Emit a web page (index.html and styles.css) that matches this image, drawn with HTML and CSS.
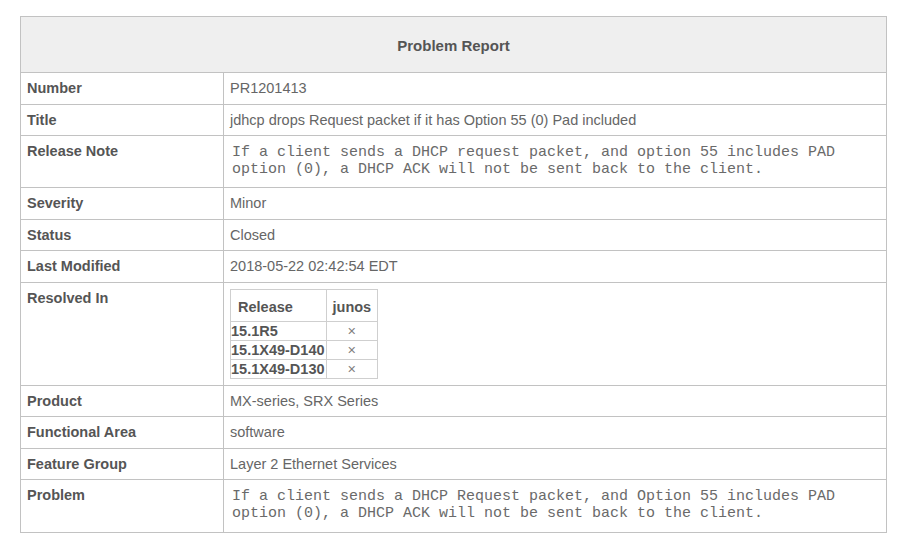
FILE: index.html
```html
<!DOCTYPE html>
<html>
<head>
<meta charset="utf-8">
<title>Problem Report</title>
<link rel="stylesheet" href="styles.css">
</head>
<body>
<table class="report">
  <colgroup><col class="col-label"><col class="col-value"></colgroup>
  <thead>
    <tr><th class="title" colspan="2">Problem Report</th></tr>
  </thead>
  <tbody>
    <tr><td class="label">Number</td><td class="value">PR1201413</td></tr>
    <tr><td class="label">Title</td><td class="value">jdhcp drops Request packet if it has Option 55 (0) Pad included</td></tr>
    <tr><td class="label">Release Note</td><td class="value"><pre class="mono">If a client sends a DHCP request packet, and option 55 includes PAD
option (0), a DHCP ACK will not be sent back to the client.</pre></td></tr>
    <tr><td class="label">Severity</td><td class="value">Minor</td></tr>
    <tr><td class="label">Status</td><td class="value">Closed</td></tr>
    <tr><td class="label">Last Modified</td><td class="value">2018-05-22 02:42:54 EDT</td></tr>
    <tr><td class="label">Resolved In</td><td class="value">
      <table class="releases">
        <thead><tr><th class="rel-head">Release</th><th class="rel-head junos">junos</th></tr></thead>
        <tbody>
          <tr><td class="rel">15.1R5</td><td class="mark">×</td></tr>
          <tr><td class="rel">15.1X49-D140</td><td class="mark">×</td></tr>
          <tr><td class="rel">15.1X49-D130</td><td class="mark">×</td></tr>
        </tbody>
      </table>
    </td></tr>
    <tr><td class="label">Product</td><td class="value">MX-series, SRX Series</td></tr>
    <tr><td class="label">Functional Area</td><td class="value">software</td></tr>
    <tr><td class="label">Feature Group</td><td class="value">Layer 2 Ethernet Services</td></tr>
    <tr><td class="label">Problem</td><td class="value"><pre class="mono mono-last">If a client sends a DHCP Request packet, and Option 55 includes PAD
option (0), a DHCP ACK will not be sent back to the client.</pre></td></tr>
  </tbody>
</table>
</body>
</html>
```
FILE: styles.css
```css
html, body {
  margin: 0;
  padding: 0;
  background: #ffffff;
}

body {
  font-family: "Liberation Sans", Arial, sans-serif;
  font-size: 14.5px;
  color: #555555;
}

.report {
  border-collapse: collapse;
  table-layout: fixed;
  width: 867px;
  margin: 16px 0 0 20px;
}

.col-label { width: 203px; }

.report th,
.report td.label,
.report td.value {
  border: 1px solid #c2c2c2;
}

.title {
  background: #efefef;
  font-weight: bold;
  font-size: 15px;
  line-height: 15px;
  text-align: center;
  padding: 21px 6px 19px;
  color: #555555;
}

.label,
.value {
  padding: 6px;
  line-height: 18.5px;
  vertical-align: top;
  text-align: left;
}

.label {
  font-weight: bold;
  color: #555555;
}

.value {
  color: #666666;
}

.mono {
  margin: 2px 0 3px;
  padding-left: 2px;
  font-family: "Liberation Mono", "Courier New", monospace;
  font-size: 15px;
  line-height: 17px;
  color: #6a6a6a;
  white-space: pre;
}

.mono-last {
  margin-bottom: 4px;
}

.releases {
  border-collapse: collapse;
}

.releases th,
.releases td {
  border: 1px solid #cfcfcf;
}

.rel-head {
  font-weight: bold;
  line-height: 16px;
  padding: 9px 7px 6px;
  text-align: left;
  color: #555555;
}

.rel-head.junos {
  padding: 9px 6px 6px 6px;
  text-align: center;
}

.rel {
  font-weight: bold;
  line-height: 18px;
  padding: 0 1px 0 0;
  color: #555555;
}

.mark {
  line-height: 18px;
  padding: 0;
  text-align: center;
  color: #808080;
}
```
